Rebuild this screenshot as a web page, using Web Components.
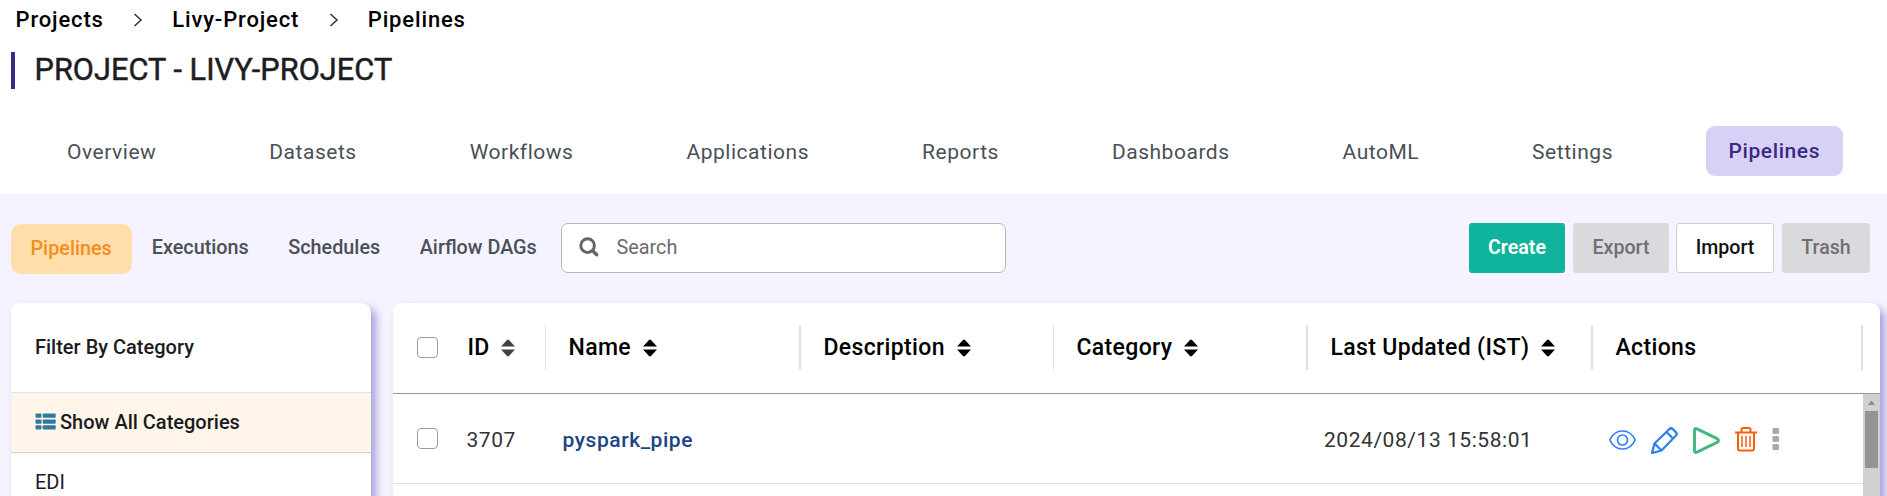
<!DOCTYPE html>
<html lang="en"><head><meta charset="utf-8"><title>Project - Livy-Project</title>
<style>html,body{margin:0;height:100%;overflow:hidden;background:#fff}body{font-family:Roboto,"Liberation Sans",sans-serif;font-size:20px;color:#1b1b1f}</style></head>
<body><project-page></project-page>
<script>
const define=(name,css,html)=>customElements.define(name,class extends HTMLElement{
  constructor(){super();const r=this.attachShadow({mode:'open'});const t=document.createElement('template');t.innerHTML=`<style>*{box-sizing:border-box}${css}</style>${html}`;r.append(t.content.cloneNode(true));}
});
define('bread-crumbs',`:host{display:flex;align-items:center;height:39px;padding-left:15.5px;box-sizing:border-box;color:#000;font-size:22px;font-weight:500;letter-spacing:.85px;line-height:39px}svg{width:10px;height:14px;margin:1px 29px 0 29.5px}svg path{fill:none;stroke:#333;stroke-width:1.5}`,
`<span>Projects</span><svg viewBox="0 0 10 14"><path d="M1.5 1 8 7 1.5 13"/></svg><span>Livy-Project</span><svg viewBox="0 0 10 14"><path d="M1.5 1 8 7 1.5 13"/></svg><span>Pipelines</span>`);
define('page-title',`:host{display:flex;align-items:center;margin:13px 0 0 11px;height:37px;padding:0 0 3px 19.5px;border-left:4px solid #3f2787;font-size:30.7px;font-weight:400;letter-spacing:.04px;color:#1d1d1f;box-sizing:border-box;white-space:pre;-webkit-text-stroke:.5px #1d1d1f}`,`<span><slot></slot></span>`);
define('nav-tab',`:host{display:flex;align-items:center;height:50px;padding:1px 23px 0;box-sizing:border-box;border-radius:9px;letter-spacing:.53px;color:#495057;font-size:21px}:host([active]){background:#d7d2f5;color:#3f2787;font-weight:500;letter-spacing:.6px;padding:0 0 1px 22.5px;width:137px;margin-left:3px}`,`<slot></slot>`);
define('nav-tabs',`:host{display:flex;justify-content:space-between;margin-top:37px;padding:0 44px 0 44px;height:68px}`,`<slot></slot>`);
define('sub-tab',`:host{display:flex;align-items:center;height:50px;padding:0 19.8px 2px;box-sizing:border-box;border-radius:10px;color:#495057;font-weight:500;font-size:19.8px;white-space:nowrap}:host([active]){background:#ffdeac;color:#f38d1c}`,`<slot></slot>`);
define('search-box',`:host{display:flex;align-items:center;width:445px;height:50px;box-sizing:border-box;border:1px solid #b7b7bb;border-radius:7px;background:#fff;color:#6b6b6b;font-size:19.8px;padding:0 0 2px 17px}svg{width:20px;height:20px;margin:0 18px 0 0}`,
`<svg viewBox="0 0 20 20" fill="none" stroke="#666"><circle cx="8.6" cy="8.6" r="6.8" stroke-width="3"/><path d="m13.7 13.7 4 4" stroke-width="3.4" stroke-linecap="round"/></svg><slot></slot>`);
define('tool-button',`:host{display:flex;align-items:center;justify-content:center;height:50px;width:96px;box-sizing:border-box;border-radius:3px;font-size:19.6px;font-weight:500;background:#dad9de;color:#6f6f74;padding-bottom:2px}:host([primary]){background:#10b39b;color:#fff;font-weight:600}:host([plain]){background:#fff;color:#111;border:1px solid #cfcfd6;width:98px}:host([narrow]){width:88px}`,`<slot></slot>`);
define('tool-bar',`:host{display:flex;height:109px;padding:29px 17px 0 11px;box-sizing:border-box}.b{display:flex;margin-left:auto;gap:8px}.b tool-button[plain]{margin-left:-1px}sub-tab[active]{width:121px;padding:0 0 2px 19.5px;margin-right:0;margin-top:1px}search-box{margin-left:4px}`,
`<sub-tab active>Pipelines</sub-tab><sub-tab>Executions</sub-tab><sub-tab>Schedules</sub-tab><sub-tab>Airflow DAGs</sub-tab><search-box>Search</search-box><div class="b"><tool-button primary>Create</tool-button><tool-button>Export</tool-button><tool-button plain>Import</tool-button><tool-button narrow>Trash</tool-button></div>`);
define('category-panel',`:host{display:flex;flex-direction:column;width:360px;height:240px;box-sizing:border-box;border-radius:9px 9px 0 0;background:#fff;box-shadow:5px 5px 8px #a8a0da;font-size:20px;color:#1b1b1f}div{display:flex;align-items:center;padding:0 0 2px 24px;flex:none}.h{height:90px;font-weight:500;border-bottom:1px solid #dee2e6}.a{height:60px;font-weight:500;background:#fff5e8;border-bottom:1px solid #d9d6c8}.e{height:59px}svg{width:21px;height:17px;margin:0 4px 1px 0}`,
`<div class="h">Filter By Category</div><div class="a"><svg viewBox="0 0 21 17" fill="#2e7a9e"><rect x=".5" y=".5" width="6" height="4.3" rx="1"/><rect x="7.7" y=".5" width="13" height="4.3" rx="1"/><rect x=".5" y="6.4" width="6" height="4.3" rx="1"/><rect x="7.7" y="6.4" width="13" height="4.3" rx="1"/><rect x=".5" y="12.3" width="6" height="4.3" rx="1"/><rect x="7.7" y="12.3" width="13" height="4.3" rx="1"/></svg>Show All Categories</div><div class="e">EDI</div>`);
define('check-box',`:host{display:block;width:21px;height:21px;box-sizing:border-box;border:1.5px solid #9a9ca3;border-radius:4px;background:#fff;flex:none}`,``);
define('sort-icon',`:host{display:block;width:14px;height:18px;flex:none;color:#000}svg{display:block}`,`<svg width="14" height="18" viewBox="0 0 14 18" fill="currentColor"><path d="M0 7.5 6.2.7h1.6L14 7.5zM0 10.5 6.2 17.3h1.6L14 10.5z"/></svg>`);
define('head-cell',`:host{display:flex;align-items:center;height:45px;padding-left:22.5px;gap:12px;box-sizing:border-box;border-right:1px solid #dee2e6;font-size:23px;font-weight:500;letter-spacing:.35px;color:#000;white-space:nowrap}:host([thick]){border-right:2px solid #dfe0e4}`,`<slot></slot>`);
define('row-actions',`:host{display:flex;align-items:center}svg{display:block;flex:none}`,
`<svg width="27" height="20" style="margin:3px 15px 0 0" viewBox="0 0 27 20" fill="none" stroke="#2f80ed" stroke-width="1.7"><path d="M.9 10C3.4 4.200 8 1 13.500 1S23.600 4.200 26.100 10C23.600 15.800 19 19 13.500 19S3.400 15.800.9 10z"/><circle cx="13.500" cy="10" r="5"/></svg>
<svg width="27" height="27" style="margin:3px 15px 0 0" viewBox="0 0 27 27" fill="none" stroke="#2f80ed" stroke-width="2.300" stroke-linejoin="round"><path d="M1 26 3.500 16.500 18.200 2.200Q20 .4 21.900 2.200L24.800 5.100Q26.600 7 24.800 8.800L10.500 23.500zM3.500 16.500 10.500 23.500M15.500 5l6.500 6.500"/></svg>
<svg width="27" height="27" style="margin:3px 15px 0 0" viewBox="0 0 27 27" fill="none" stroke="#45b882" stroke-width="3" stroke-linejoin="round"><path d="M1.500 3.200Q1.500.9 4 1.900L24.100 11.600Q26.800 13.500 24.100 15.400L4 25.100Q1.500 26.100 1.500 23.800z"/></svg>
<svg width="22" height="25" style="margin:1px 15px 0 0" viewBox="0 0 22 25" fill="none" stroke="#ff5c0a" stroke-width="2"><path d="M0 5.500h22M6.500 5V2.500Q6.500 1 8 1h6q1.500 0 1.500 1.500V5M3 5.500V21.500Q3 23.500 5 23.500H17Q19 23.500 19 21.500V5.500"/><path stroke-width="1.500" d="M7 9v11M11 9v11M15 9v11"/></svg>
<svg width="8" height="24" style="margin-top:1px" viewBox="0 0 8 24" fill="#a9a9ad"><rect x=".500" y="1" width="6.500" height="6" rx="1"/><rect x=".500" y="9" width="6.500" height="6" rx="1"/><rect x=".500" y="17" width="6.500" height="6" rx="1"/></svg>`);
define('scroll-track',`:host{display:flex;flex-direction:column;align-items:center;width:17px;background:#d0d0d0}svg{margin-top:6px}i{display:block;width:13px;height:57px;background:#949494;margin-top:6px}`,`<svg width="7" height="5" viewBox="0 0 7 5"><path d="M0 5 3 1h1l3 4z" fill="#8a8a8a"/></svg><i></i>`);
define('pipeline-table',`:host{display:flex;flex-direction:column;width:1487px;height:240px;border-radius:9px 9px 0 0;background:#fff;box-shadow:5px 5px 8px #a8a0da}
.head{display:grid;grid-template-columns:153px 255px 253px 254px 285px 270px 17px;height:91px;border-bottom:1px solid #97979b;padding-top:22px;flex:none}
.row{display:grid;grid-template-columns:148px 762px 260px 1fr;width:1470px;height:90px;border-bottom:1px solid #dee0e4;align-items:center}
.body{display:flex;height:149px}.first{padding-left:24px;gap:0}.first check-box{margin-right:29.5px}.first sort-icon{margin-left:11px;color:#444}
.sel{display:flex;align-items:center;padding-left:24px}.sel check-box{margin:-2px 28.5px 0 0}.row{letter-spacing:.55px;color:#333;font-size:21px}.row>*{white-space:nowrap}.row>:not(row-actions){padding-top:2px}.name{font-weight:500;color:#1c4587;padding-left:21.5px}`,
`<div class="head"><head-cell class="first"><check-box></check-box><span>ID</span><sort-icon></sort-icon></head-cell><head-cell thick>Name<sort-icon></sort-icon></head-cell><head-cell>Description<sort-icon></sort-icon></head-cell><head-cell thick>Category<sort-icon></sort-icon></head-cell><head-cell thick>Last Updated (IST)<sort-icon></sort-icon></head-cell><head-cell thick>Actions</head-cell></div>
<div class="body"><div class="row"><div class="sel"><check-box></check-box><span>3707</span></div><div class="name">pyspark_pipe</div><div style="padding-left:21px">2024/08/13 15:58:01</div><row-actions style="padding-left:46px"></row-actions></div><scroll-track></scroll-track></div>`);
define('project-page',`:host{display:flex;flex-direction:column;width:1887px;height:496px;overflow:hidden}main{display:block;background:#f5f3ff;height:302px}.cards{display:flex;gap:22px;padding-left:11px}`,
`<bread-crumbs></bread-crumbs><page-title>PROJECT - LIVY-PROJECT</page-title><nav-tabs><nav-tab>Overview</nav-tab><nav-tab>Datasets</nav-tab><nav-tab>Workflows</nav-tab><nav-tab>Applications</nav-tab><nav-tab>Reports</nav-tab><nav-tab>Dashboards</nav-tab><nav-tab>AutoML</nav-tab><nav-tab>Settings</nav-tab><nav-tab active>Pipelines</nav-tab></nav-tabs>
<main><tool-bar></tool-bar><div class="cards"><category-panel></category-panel><pipeline-table></pipeline-table></div></main>`);
</script></body></html>
